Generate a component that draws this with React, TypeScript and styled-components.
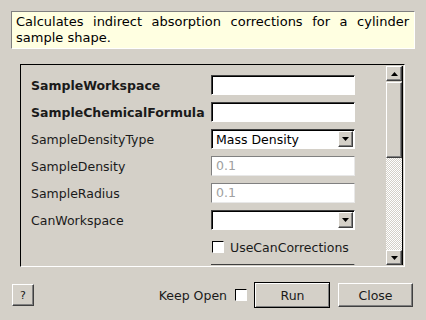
import React from 'react';
import styled, { createGlobalStyle, css } from 'styled-components';

const GlobalStyle = createGlobalStyle`
  html, body {
    margin: 0;
    padding: 0;
    background: #d4d0c8;
  }
  body {
    font-family: "DejaVu Sans", "Liberation Sans", sans-serif;
    font-size: 12.5px;
    color: #000;
  }
`;

type Field =
  | { kind: 'text'; label: string; bold?: boolean; value?: string; disabled?: boolean }
  | { kind: 'combo'; label: string; value: string }
  | { kind: 'check'; label: string };

// last row is scrolled half out of view, its label sits below the fold
const FIELDS: Field[] = [
  { kind: 'text', label: 'SampleWorkspace', bold: true },
  { kind: 'text', label: 'SampleChemicalFormula', bold: true },
  { kind: 'combo', label: 'SampleDensityType', value: 'Mass Density' },
  { kind: 'text', label: 'SampleDensity', value: '0.1', disabled: true },
  { kind: 'text', label: 'SampleRadius', value: '0.1', disabled: true },
  { kind: 'combo', label: 'CanWorkspace', value: '' },
  { kind: 'check', label: 'UseCanCorrections' },
  { kind: 'text', label: '' },
];

const raised = css`
  border-top: 1px solid #ffffff;
  border-left: 1px solid #ffffff;
  border-right: 1px solid #404040;
  border-bottom: 1px solid #404040;
  box-shadow: inset -1px -1px 0 #808080;
`;

const sunken = css`
  border-top: 1px solid #404040;
  border-left: 1px solid #404040;
  border-right: 1px solid #ffffff;
  border-bottom: 1px solid #ffffff;
  box-shadow: inset 1px 1px 0 #000000;
`;

function Arrow({ up }: { up?: boolean }) {
  return (
    <svg width="7" height="4" viewBox="0 0 7 4">
      <polygon points={up ? '0,4 7,4 3.5,0' : '0,0 7,0 3.5,4'} fill="#000" />
    </svg>
  );
}

export default function App() {
  return (
    <Page>
      <GlobalStyle />
      <Description>
        Calculates indirect absorption corrections for a cylinder sample shape.
      </Description>
      <Frame>
        <Content>
          {FIELDS.map((f, i) => (
            <React.Fragment key={i}>
              {f.kind === 'check' ? (
                <>
                  <span />
                  <CheckRow>
                    <CheckBox />
                    {f.label}
                  </CheckRow>
                </>
              ) : (
                <>
                  <Label bold={f.kind === 'text' && !!f.bold}>{f.label}</Label>
                  {f.kind === 'text' ? (
                    <Input disabled={!!f.disabled}>{f.value}</Input>
                  ) : (
                    <Combo>
                      <span>{f.value}</span>
                      <DropButton>
                        <Arrow />
                      </DropButton>
                    </Combo>
                  )}
                </>
              )}
            </React.Fragment>
          ))}
        </Content>
        <ScrollBar>
          <ScrollButton>
            <Arrow up />
          </ScrollButton>
          <Slider />
          <Trough />
          <ScrollButton>
            <Arrow />
          </ScrollButton>
        </ScrollBar>
      </Frame>
      <Footer>
        <HelpButton>?</HelpButton>
        <Spacer />
        <KeepOpen>
          Keep Open
          <CheckBox />
        </KeepOpen>
        <PushButton isDefault>Run</PushButton>
        <PushButton>Close</PushButton>
      </Footer>
    </Page>
  );
}

const Page = styled.div`
  width: 426px;
  height: 320px;
  box-sizing: border-box;
  padding: 11px 11px 0 11px;
  display: flex;
  flex-direction: column;
  overflow: hidden;
`;

const Description = styled.div`
  box-sizing: border-box;
  width: 404px;
  height: 38px;
  padding: 2px 5px 0 4px;
  background: #ffffe1;
  border-top: 1px solid #808080;
  border-left: 1px solid #808080;
  border-right: 1px solid #ffffff;
  border-bottom: 1px solid #ffffff;
  text-align: justify;
  line-height: 16px;
  font-size: 13px;
`;

const Frame = styled.div`
  box-sizing: border-box;
  margin: 15px 0 0 9px;
  width: 385px;
  height: 203px;
  padding: 1px;
  border-top: 1px solid #000;
  border-left: 1px solid #000;
  border-right: 1px solid #ffffff;
  border-bottom: 1px solid #ffffff;
  display: flex;
`;

const Content = styled.div`
  flex: 1;
  overflow: hidden;
  padding: 9px 0 0 9px;
  display: grid;
  grid-template-columns: 180px 144px;
  grid-auto-rows: 20px;
  row-gap: 7px;
  align-items: center;
  align-content: start;
`;

const Label = styled.span<{ bold: boolean }>`
  font-weight: ${({ bold }) => (bold ? 'bold' : 'normal')};
  color: #1a1a1a;
  white-space: nowrap;
`;

const Input = styled.div<{ disabled: boolean }>`
  box-sizing: border-box;
  height: 20px;
  background: #fff;
  padding: 0 4px;
  line-height: 18px;
  color: ${({ disabled }) => (disabled ? '#a0a0a0' : '#000')};
  ${({ disabled }) =>
    disabled
      ? css`
          border-top: 1px solid #808080;
          border-left: 1px solid #808080;
          border-right: 1px solid #e8e8e8;
          border-bottom: 1px solid #e8e8e8;
        `
      : sunken}
`;

const Combo = styled.div`
  box-sizing: border-box;
  height: 20px;
  background: #fff;
  ${sunken}
  display: flex;
  align-items: center;
  justify-content: space-between;
  padding: 0 1px 0 4px;
`;

const DropButton = styled.div`
  box-sizing: border-box;
  width: 15px;
  height: 16px;
  background: #d4d0c8;
  ${raised}
  display: flex;
  align-items: center;
  justify-content: center;
`;

const CheckRow = styled.label`
  display: flex;
  align-items: center;
  gap: 6px;
  padding-left: 1px;
  color: #1a1a1a;
`;

const CheckBox = styled.span`
  box-sizing: border-box;
  width: 12px;
  height: 12px;
  background: #fff;
  border-top: 1px solid #000;
  border-left: 1px solid #000;
  border-right: 1px solid #fff;
  border-bottom: 1px solid #fff;
  display: inline-block;
`;

const ScrollBar = styled.div`
  width: 16px;
  display: flex;
  flex-direction: column;
  border-right: 1px solid #000;
`;

const ScrollButton = styled.div`
  box-sizing: border-box;
  height: 15px;
  background: #d4d0c8;
  ${raised}
  display: flex;
  align-items: center;
  justify-content: center;
`;

const Slider = styled.div`
  box-sizing: border-box;
  height: 76px;
  margin-top: 1px;
  background: #d4d0c8;
  ${raised}
`;

const Trough = styled.div`
  flex: 1;
  background-color: #ffffff;
  background-image: linear-gradient(45deg, #d4d0c8 25%, transparent 25%, transparent 75%, #d4d0c8 75%),
    linear-gradient(45deg, #d4d0c8 25%, transparent 25%, transparent 75%, #d4d0c8 75%);
  background-size: 2px 2px;
  background-position: 0 0, 1px 1px;
`;

const Footer = styled.div`
  margin-top: 15px;
  display: flex;
  align-items: center;
  gap: 8px;
  padding: 0 2px 0 1px;
`;

const Spacer = styled.div`
  flex: 1;
`;

const HelpButton = styled.div`
  box-sizing: border-box;
  width: 22px;
  height: 22px;
  background: #d4d0c8;
  ${raised}
  font-size: 11px;
  display: flex;
  align-items: center;
  justify-content: center;
  color: #1a1a1a;
`;

const KeepOpen = styled.label`
  display: flex;
  align-items: center;
  gap: 8px;
  color: #1a1a1a;
  margin-right: -1px;
`;

const PushButton = styled.div<{ isDefault?: boolean }>`
  box-sizing: border-box;
  width: ${({ isDefault }) => (isDefault ? '76px' : '75px')};
  height: ${({ isDefault }) => (isDefault ? '26px' : '24px')};
  background: #d4d0c8;
  ${raised}
  ${({ isDefault }) =>
    isDefault &&
    css`
      outline: 1px solid #000;
      outline-offset: -1px;
      border-width: 2px 1px 1px 2px;
    `}
  display: flex;
  align-items: center;
  justify-content: center;
  color: #1a1a1a;
`;
